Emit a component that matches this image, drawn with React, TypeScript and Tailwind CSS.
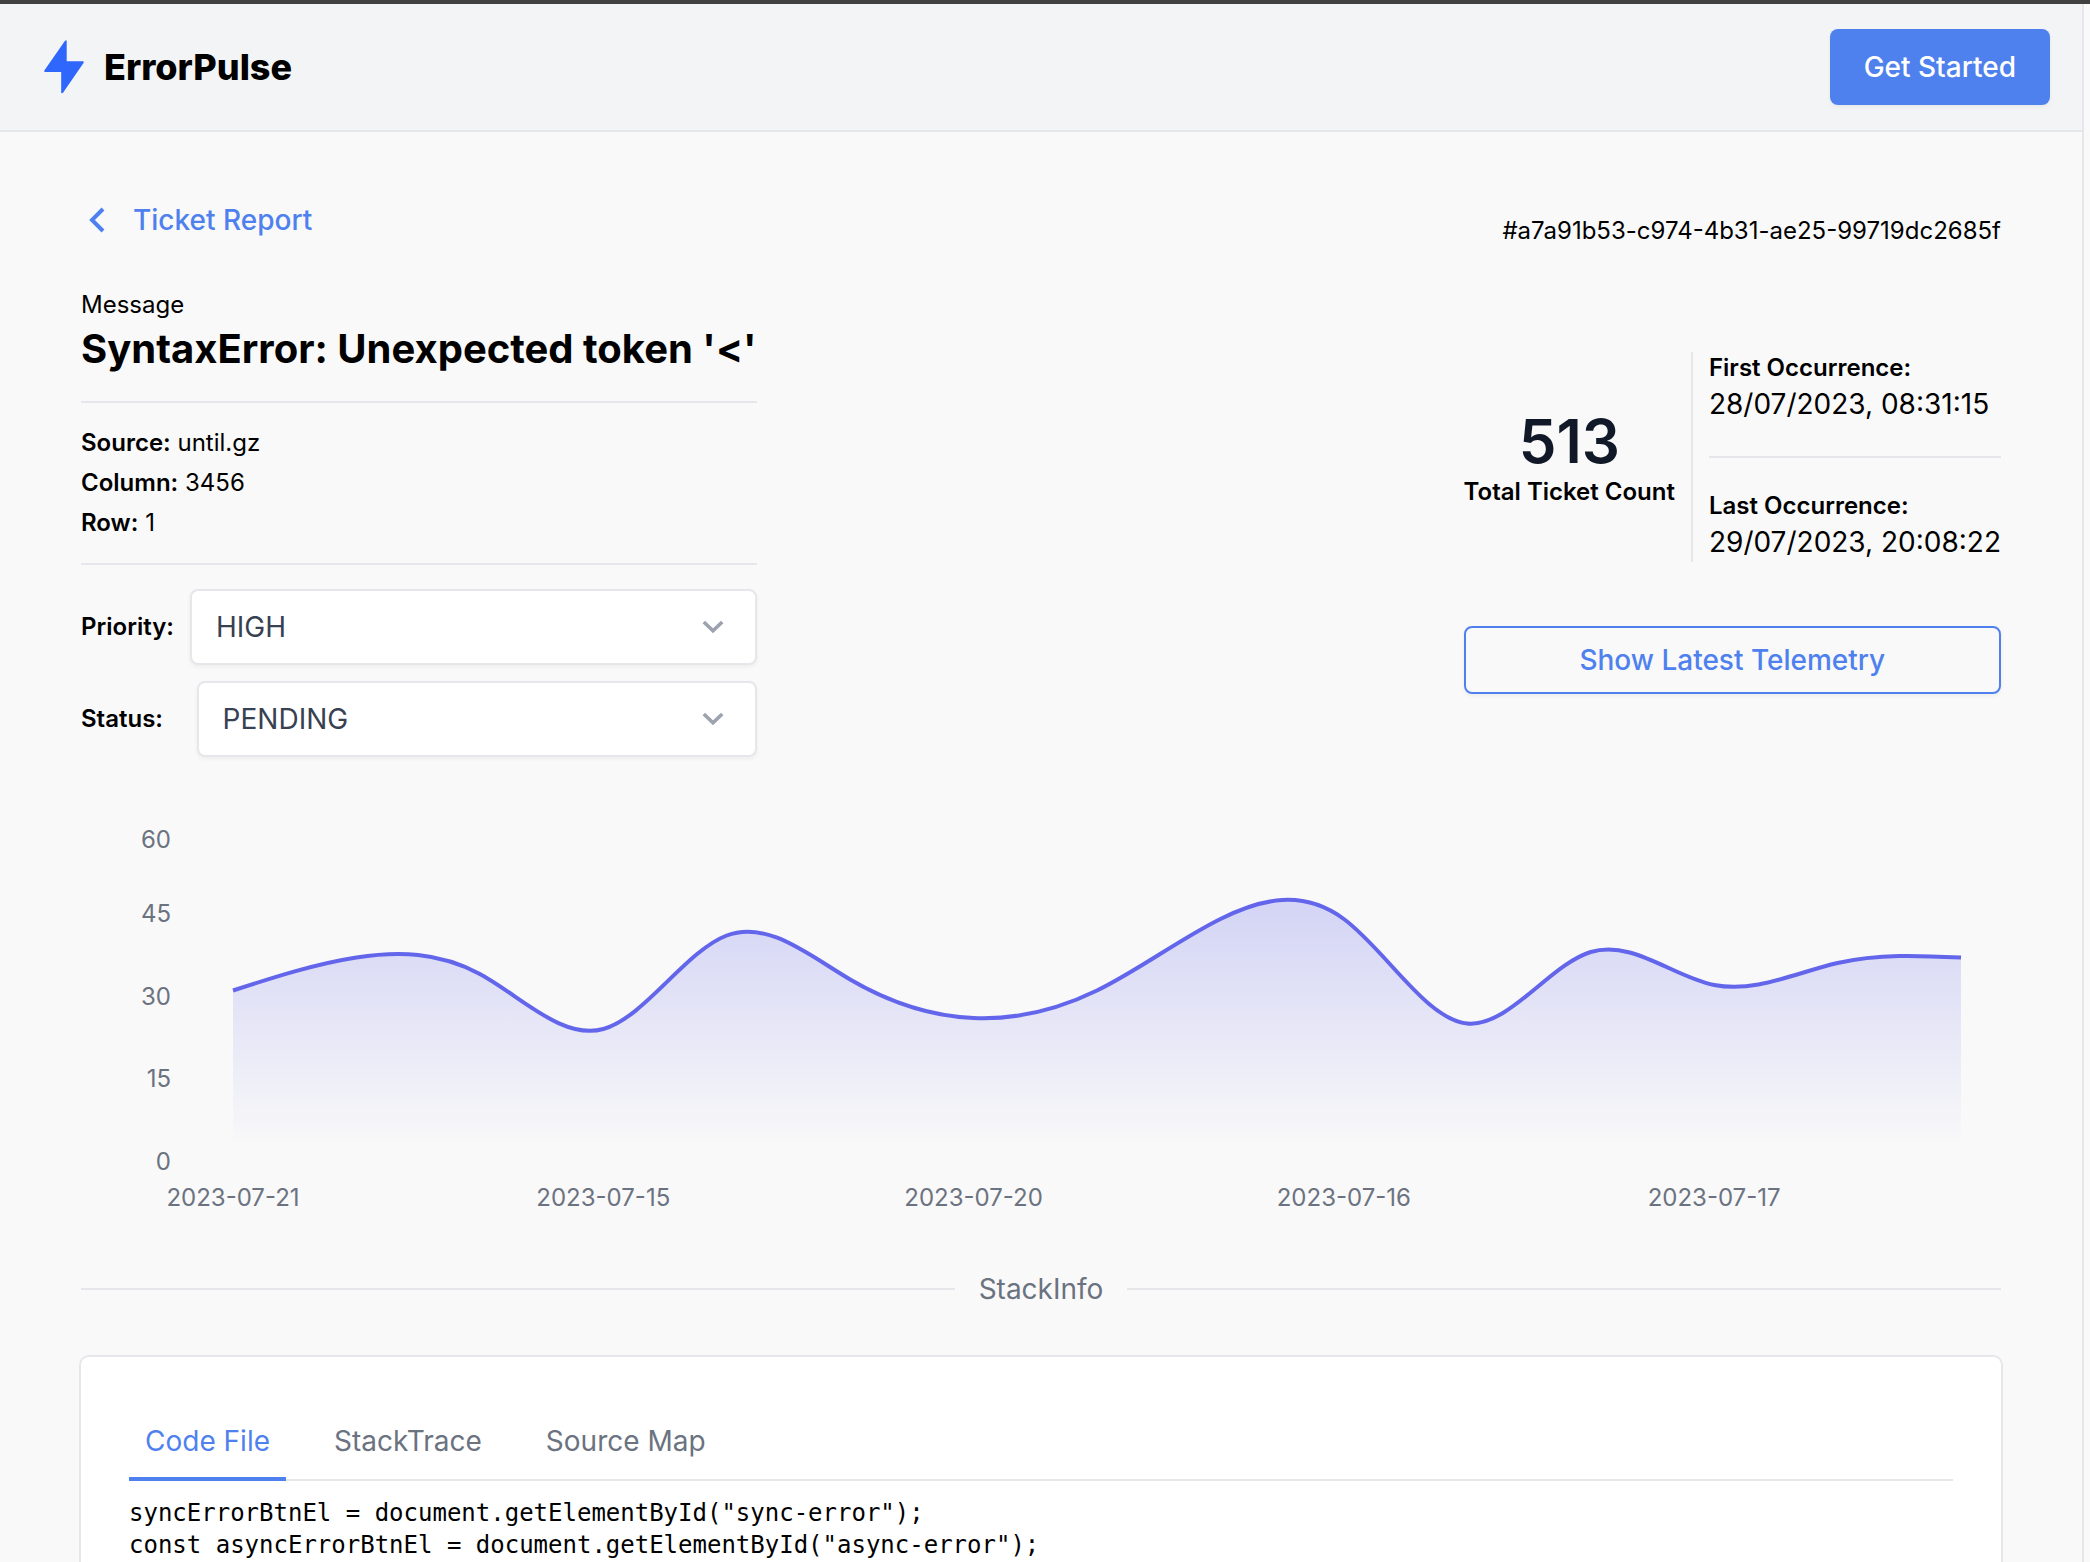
import { useState } from 'react';

const TABS = ['Code File', 'StackTrace', 'Source Map'];

const DETAILS = [
  { label: 'Source:', value: 'until.gz' },
  { label: 'Column:', value: '3456' },
  { label: 'Row:', value: '1' },
];

const CODE = `syncErrorBtnEl = document.getElementById("sync-error");
const asyncErrorBtnEl = document.getElementById("async-error");`;

const COUNTS = [31, 37, 34, 24, 41, 33, 26, 31, 44, 44, 25, 38, 32, 36, 37];
const X_LABELS = ['2023-07-21', '2023-07-15', '2023-07-20', '2023-07-16', '2023-07-17'];
const Y_LABELS = [
  { value: 60, y: 42 },
  { value: 45, y: 116 },
  { value: 30, y: 199 },
  { value: 15, y: 281 },
  { value: 0, y: 364 },
];

const PLOT = { left: 152, right: 1880, bottom: 364, unit: 5.5 };

// control points of a natural cubic spline along one axis
function controlPoints(v: number[]) {
  const n = v.length - 1;
  const a = new Array(n).fill(0);
  const b = new Array(n).fill(4);
  const r = new Array(n).fill(0);
  b[0] = 2;
  r[0] = v[0] + 2 * v[1];
  for (let i = 1; i < n - 1; i++) r[i] = 4 * v[i] + 2 * v[i + 1];
  b[n - 1] = 7;
  r[n - 1] = 8 * v[n - 1] + v[n];
  for (let i = 1; i < n; i++) {
    const m = (i === n - 1 ? 2 : 1) / b[i - 1];
    b[i] -= m;
    r[i] -= m * r[i - 1];
  }
  a[n - 1] = r[n - 1] / b[n - 1];
  for (let i = n - 2; i >= 0; i--) a[i] = (r[i] - a[i + 1]) / b[i];
  const c = a.map((_, i) => (i === n - 1 ? (v[n] + a[n - 1]) / 2 : 2 * v[i + 1] - a[i + 1]));
  return [a, c];
}

function buildLine() {
  const step = (PLOT.right - PLOT.left) / (COUNTS.length - 1);
  const xs = COUNTS.map((_, i) => PLOT.left + i * step);
  const ys = COUNTS.map(c => PLOT.bottom - c * PLOT.unit);
  const [x1, x2] = controlPoints(xs);
  const [y1, y2] = controlPoints(ys);
  let d = `M${xs[0]},${ys[0]}`;
  for (let i = 0; i < xs.length - 1; i++) {
    d += `C${x1[i]},${y1[i]},${x2[i]},${y2[i]},${xs[i + 1]},${ys[i + 1]}`;
  }
  return d;
}

function Chart() {
  const line = buildLine();
  const tickGap = ((PLOT.right - PLOT.left) / 14) * 3;
  return (
    <svg viewBox="0 0 1920 432" className="block w-full h-auto mt-10" role="img" aria-label="Tickets per day">
      <defs>
        <linearGradient id="ticketFill" x1="0" y1="0" x2="0" y2="1">
          <stop offset="5%" stopColor="#6366e8" stopOpacity={0.24} />
          <stop offset="95%" stopColor="#6366e8" stopOpacity={0} />
        </linearGradient>
      </defs>
      <path d={`${line}V${PLOT.bottom}H${PLOT.left}Z`} fill="url(#ticketFill)" />
      <path d={line} fill="none" stroke="#6366ea" strokeWidth={4} />
      <g className="fill-[#6b7280] text-[24px]">
        {Y_LABELS.map(t => (
          <text key={t.value} x={90} y={t.y + 9} textAnchor="end">{t.value}</text>
        ))}
        {X_LABELS.map((label, i) => (
          <text key={label} x={PLOT.left + i * tickGap} y={409} textAnchor="middle">{label}</text>
        ))}
      </g>
    </svg>
  );
}

function Select({ id, options, className }: { id: string; options: string[]; className: string }) {
  return (
    <div className={`relative ${className}`}>
      <select id={id} className="appearance-none w-full h-[76px] px-6 text-[28px] text-[#374151] bg-white border-2 border-[#e5e7eb] rounded-lg shadow-[0_2px_4px_rgba(0,0,0,0.05)] outline-none">
        {options.map(o => <option key={o}>{o}</option>)}
      </select>
      <svg viewBox="0 0 24 14" className="absolute right-8 top-1/2 -translate-y-1/2 w-6 h-3.5 pointer-events-none" fill="none" stroke="#9ca3af" strokeWidth={3.6}>
        <path d="M2.800 2l9.200 8.800L21.200 2" />
      </svg>
    </div>
  );
}

function Occurrence({ label, value }: { label: string; value: string }) {
  return (
    <div>
      <p className="text-[24px] leading-8 font-semibold">{label}</p>
      <p className="text-[28px] leading-10">{value}</p>
    </div>
  );
}

export default function App() {
  const [tab, setTab] = useState('Code File');

  return (
    <div className="h-screen overflow-hidden flex flex-col bg-[#f9f9f9] text-black border-t-4 border-[#414141] pr-1.5 font-['Inter',sans-serif]">
      <div className="flex-1 border-r-2 border-[#e5e7eb]">
        <header className="flex items-center justify-between h-32 pl-11 pr-8 bg-[#f3f4f6] border-b-2 border-[#e5e7eb]">
          <a href="#" className="flex items-center gap-5">
            <svg viewBox="0 0 40 54" className="w-10 h-[54px]" fill="#2f66fb">
              <path d="M21 .8Q22.600 -.4 22.700 1.200V21.300H39Q40.200 21.600 39.500 23L19 52.800Q17.400 54 17.200 52.600V32H1Q-.3 31.600 .5 30.300Z" />
            </svg>
            <span className="text-[36px] leading-10 font-extrabold">ErrorPulse</span>
          </a>
          <button type="button" className="h-[76px] px-[34px] text-[28px] font-medium text-white bg-[#4f81ee] rounded-lg shadow-[0_2px_4px_rgba(0,0,0,0.05)]">
            Get Started
          </button>
        </header>

        <main className="max-w-[1920px] mx-auto">
          <div className="flex items-start justify-between">
            <section className="pt-[68px]">
              <a href="#" className="flex items-center gap-7 pl-2 text-[28px] leading-10 font-medium text-[#4f81ee]">
                <svg viewBox="0 0 16 26" className="w-4 h-[26px]" fill="none" stroke="currentColor" strokeWidth={4}>
                  <path d="M14 2L3 13l11 11" />
                </svg>
                Ticket Report
              </a>
              <p className="mt-[49px] text-[24px] leading-8">Message</p>
              <h1 className="text-[40px] leading-[56px] font-bold">SyntaxError: Unexpected token '&lt;'</h1>
              <hr className="mt-6 border-t-2 border-[#e5e7eb]" />
              <div className="py-5 text-[24px] leading-10">
                {DETAILS.map(d => (
                  <p key={d.label}><span className="font-semibold">{d.label}</span> {d.value}</p>
                ))}
              </div>
              <hr className="border-t-2 border-[#e5e7eb]" />
              <div className="flex flex-col gap-4 mt-6">
                <div className="flex items-center justify-between gap-4">
                  <label htmlFor="priority" className="text-[24px] font-semibold">Priority:</label>
                  <Select id="priority" options={['HIGH', 'MEDIUM', 'LOW']} className="flex-1" />
                </div>
                <div className="flex items-center justify-between gap-4">
                  <label htmlFor="status" className="text-[24px] font-semibold">Status:</label>
                  <Select id="status" options={['PENDING', 'OPEN', 'CLOSED']} className="w-[560px]" />
                </div>
              </div>
            </section>

            <section className="pt-[83px]">
              <p className="text-right text-[24px] leading-8">#a7a91b53-c974-4b31-ae25-99719dc2685f</p>
              <div className="flex mt-[105px]">
                <div className="flex flex-col items-center justify-center pr-4">
                  <p className="text-[60px] leading-[70px] font-semibold text-[#111827]">513</p>
                  <p className="text-[24px] leading-8 font-semibold">Total Ticket Count</p>
                </div>
                <div className="flex-1 pl-4 border-l-2 border-[#e5e7eb]">
                  <Occurrence label="First Occurrence:" value="28/07/2023, 08:31:15" />
                  <hr className="my-8 border-t-2 border-[#e5e7eb]" />
                  <Occurrence label="Last Occurrence:" value="29/07/2023, 20:08:22" />
                </div>
              </div>
              <button type="button" className="w-full h-[68px] mt-16 text-[28px] font-medium text-[#4f81ee] border-2 border-[#4f81ee] rounded-lg shadow-[0_2px_4px_rgba(0,0,0,0.05)]">
                Show Latest Telemetry
              </button>
            </section>
          </div>

          <Chart />

          <div className="flex items-center gap-6 mt-10">
            <hr className="flex-1 border-t-2 border-[#e5e7eb]" />
            <h2 className="text-[28px] leading-10 text-[#6b7280]">StackInfo</h2>
            <hr className="flex-1 border-t-2 border-[#e5e7eb]" />
          </div>

          <section className="mt-12 p-12 bg-white rounded-lg ring-2 ring-[#e5e7eb]">
            <div role="tablist" className="flex gap-8 shadow-[inset_0_-2px_0_#e5e7eb]">
              {TABS.map(t => (
                <button key={t} type="button" role="tab" aria-selected={tab === t} onClick={() => setTab(t)}
                  className={`px-4 py-4 text-[28px] leading-10 border-b-4 ${tab === t ? 'text-[#4f81ee] border-[#4f81ee]' : 'text-[#6b7280] border-transparent'}`}>
                  {t}
                </button>
              ))}
            </div>
            <pre className="mt-4 text-[24px] leading-8 font-['DejaVu_Sans_Mono',monospace]">{CODE}</pre>
          </section>
        </main>
      </div>
    </div>
  );
}
